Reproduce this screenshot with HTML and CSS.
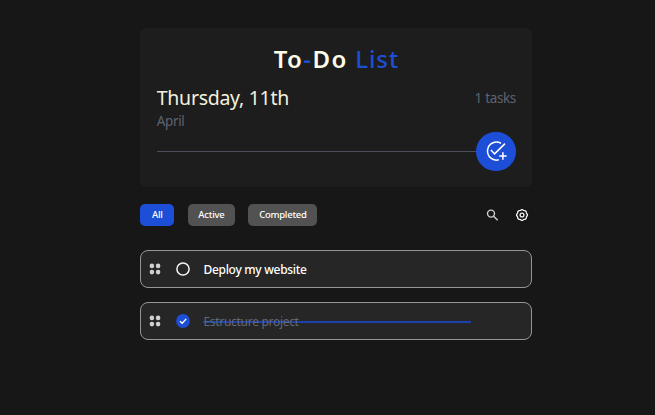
FILE: index.html
```html
<!DOCTYPE html>
<html lang="en">
<head>
<meta charset="utf-8">
<title>To-Do List</title>
<link rel="stylesheet" href="styles.css">
</head>
<body>
<main class="app">
  <header class="card">
    <h1 class="title">To<span class="dash">-</span>Do <span class="list-word">List</span></h1>
    <div class="date-row">
      <div>
        <div class="date">Thursday, 11th</div>
        <div class="month">April</div>
      </div>
      <div class="count">1 tasks</div>
    </div>
    <div class="add-row">
      <span class="rule"></span>
      <button class="add" aria-label="Add task">
        <svg width="24" height="24" viewBox="0 0 24 24"><path d="M17 4.3A9 9 0 1 0 14.8 20.8M6.9 11L10.6 14.9L21 4.6M18.9 13.3V20.7M15.2 17H22.6" fill="none" stroke="currentColor" stroke-width="1.5"/></svg>
      </button>
    </div>
  </header>
  <nav class="toolbar">
    <button class="filter all selected">All</button>
    <button class="filter active">Active</button>
    <button class="filter completed">Completed</button>
    <span class="tools">
      <svg width="14" height="14" viewBox="0 0 14 14"><g fill="none" stroke="#d0d0d0" stroke-width="1.4"><circle cx="6" cy="5.6" r="3.5"/><path d="M8.6 8.2L12.6 12.2"/></g></svg>
      <svg width="14" height="14" viewBox="0 0 14 14"><g fill="none" stroke="#f0f0f0" stroke-width="1.3"><path stroke-linejoin="round" d="M5.7 2.3L6.3 1.6H7.7L8.3 2.3L9.2 2.6L10.2 2.6L11.3 3.7L11.3 4.8L11.7 5.7L12.4 6.3V7.7L11.7 8.3L11.3 9.2V10.3L10.2 11.4H9.2L8.3 11.7L7.7 12.4H6.3L5.7 11.7L4.8 11.4H3.8L2.7 10.3V9.2L2.3 8.3L1.6 7.7V6.3L2.3 5.7L2.7 4.8V3.7L3.8 2.6H4.8Z"/><circle cx="7" cy="7" r="1.9"/></g></svg>
    </span>
  </nav>
  <ul class="tasks">
    <li class="task">
      <svg class="grip" width="12" height="12" viewBox="0 0 12 12"><g fill="#d0d0d0"><circle cx="2.9" cy="2.9" r="2.3"/><circle cx="9.1" cy="2.9" r="2.3"/><circle cx="2.9" cy="9.1" r="2.3"/><circle cx="9.1" cy="9.1" r="2.3"/></g></svg>
      <svg class="mark" width="16" height="16" viewBox="0 0 16 16"><circle cx="8" cy="8" r="6.1" fill="none" stroke="#f5f5f5" stroke-width="1.5"/></svg>
      <span class="label">Deploy my website</span>
    </li>
    <li class="task done">
      <svg class="grip" width="12" height="12" viewBox="0 0 12 12"><g fill="#d0d0d0"><circle cx="2.9" cy="2.9" r="2.3"/><circle cx="9.1" cy="2.9" r="2.3"/><circle cx="2.9" cy="9.1" r="2.3"/><circle cx="9.1" cy="9.1" r="2.3"/></g></svg>
      <svg class="mark" width="16" height="16" viewBox="0 0 16 16"><circle cx="8" cy="8" r="6.9" fill="#1d4ed8"/><path d="M5 8.2L7.2 10.3L11.2 5.9" fill="none" stroke="#fff" stroke-width="1.4"/></svg>
      <span class="label">Estructure project</span>
    </li>
  </ul>
</main>
</body>
</html>
```
FILE: styles.css
```css
* { box-sizing: border-box; }
body {
  margin: 0;
  min-height: 415px;
  background: #171717;
  color: #fefce8;
  font-family: "Segoe UI", "Noto Sans", sans-serif;
}
button { border: 0; margin: 0; padding: 0; font-family: inherit; }
svg { display: block; flex: none; }
.app { width: 391.6px; margin-left: 140.4px; padding-top: 28px; }
.card {
  height: 159.4px;
  padding: 15px 16px 0 16.4px;
  border-radius: 6px;
  background: #1d1d1d;
}
.title {
  margin: 0;
  font-size: 24px;
  line-height: 32px;
  font-weight: 600;
  letter-spacing: 1.4px;
  text-align: center;
  white-space: nowrap;
}
.dash, .list-word { color: #1d4ed8; }
.list-word { font-weight: 500; letter-spacing: 0.9px; }
.date-row { display: flex; justify-content: space-between; margin-top: 9px; white-space: nowrap; }
.date { font-size: 19.5px; line-height: 28px; letter-spacing: -0.28px; color: #f3f1df; }
.month, .count { font-size: 13.5px; color: #5d6370; letter-spacing: -0.35px; }
.month { line-height: 19px; }
.count { line-height: 28px; }
.add-row { display: flex; align-items: center; margin-top: 0.5px; }
.rule { flex: 1; height: 1px; background: #4b4f5a; }
.add {
  display: flex;
  align-items: center;
  justify-content: center;
  width: 39.5px;
  height: 39.5px;
  border-radius: 50%;
  background: #1d4ed8;
  color: #fff;
}
.toolbar { display: flex; align-items: center; height: 22px; margin-top: 16.4px; }
.filter {
  height: 22px;
  border-radius: 5px;
  background: #525252;
  color: #fff;
  font-size: 9.5px;
  font-weight: 500;
  letter-spacing: -0.25px;
}
.selected { background: #1d4ed8; }
.all { width: 34px; }
.active { width: 47px; margin-left: 13.5px; }
.completed { width: 69px; margin-left: 13.5px; }
.tools { display: flex; gap: 16px; margin: 0 2.6px 0 auto; }
.tasks { list-style: none; margin: 24.2px 0 0; padding: 0; }
.task {
  display: flex;
  align-items: center;
  height: 38px;
  margin-bottom: 14px;
  padding: 0 0 0 7.6px;
  border: 1px solid #969696;
  border-radius: 8px;
  background: #262626;
}
.mark { margin-left: 14px; }
.label {
  margin-left: 12.5px;
  padding-top: 2px;
  color: #fff;
  font-size: 12px;
  line-height: 18px;
  font-weight: 500;
  letter-spacing: -0.3px;
  white-space: nowrap;
}
.done .label {
  width: 268px;
  color: #626976;
  font-weight: 400;
  background: linear-gradient(#1e40af, #1e40af) 0 10px / 100% 2px no-repeat;
}
```
